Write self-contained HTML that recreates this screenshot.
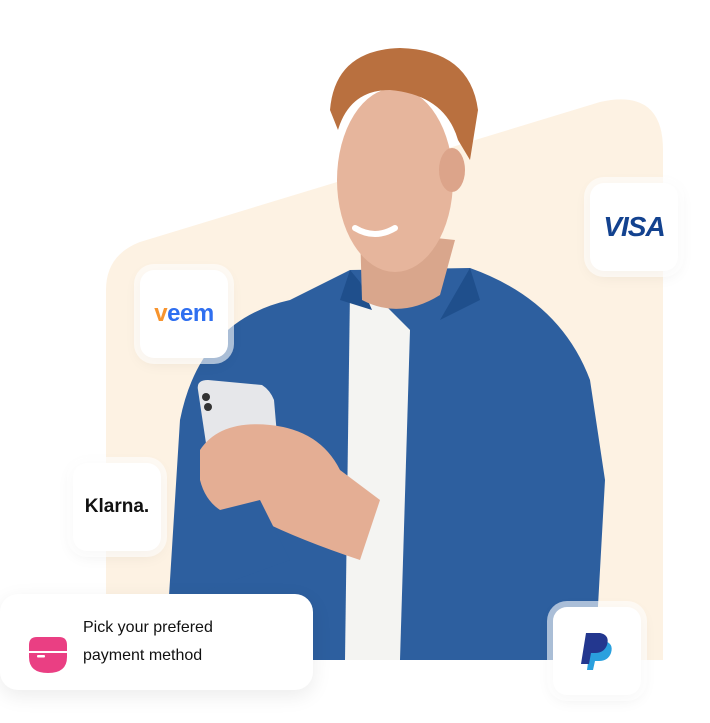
<!DOCTYPE html>
<html><head><meta charset="utf-8"><style>
body{margin:0;width:710px;height:723px;background:#fff;position:relative;overflow:hidden;font-family:"Liberation Sans",sans-serif}
.card{position:absolute;background:#fff;border-radius:14px;box-shadow:0 0 0 6px rgba(255,255,255,.6),0 4px 16px rgba(0,0,0,.08);display:flex;align-items:center;justify-content:center}
</style></head><body>
<svg width="710" height="723" style="position:absolute;left:0;top:0">
<path d="M106 290 Q106 255 140 242 L600 102 Q663 88 663 150 L663 660 L106 660 Z" fill="#fdf2e3"/>
<!-- shirt -->
<path d="M165 660 L180 420 Q200 320 290 300 L350 270 L470 268 Q560 300 590 380 L605 480 L595 660 Z" fill="#2d5f9f"/>
<path d="M350 290 L345 660 L400 660 L410 330 L380 300 Z" fill="#f4f4f2"/>
<path d="M350 270 L340 300 L372 310 L360 282 Z M470 268 L480 300 L440 320 Z" fill="#1f4f8c"/>
<!-- neck -->
<path d="M360 230 L362 300 Q400 320 440 295 L455 240 Z" fill="#d9a68c"/>
<!-- face -->
<ellipse cx="395" cy="180" rx="58" ry="92" fill="#e6b59c"/>
<ellipse cx="452" cy="170" rx="13" ry="22" fill="#dca48a"/>
<path d="M330 110 Q335 50 400 48 Q470 50 478 110 L470 160 L458 140 Q445 95 390 90 Q350 90 338 130 Z" fill="#b9703f"/>
<path d="M355 228 Q375 240 395 228" stroke="#fff" stroke-width="6" fill="none" stroke-linecap="round"/>
<!-- phone -->
<path d="M198 390 Q196 380 208 380 L262 385 Q270 390 274 400 L280 470 L210 470 Z" fill="#e6e7ea"/>
<circle cx="206" cy="397" r="4" fill="#333"/><circle cx="208" cy="407" r="4" fill="#333"/>
<!-- hands -->
<path d="M200 450 Q220 420 270 425 Q320 430 340 470 L380 500 L360 560 Q300 540 260 520 Q210 520 200 480 Z" fill="#e4ae94"/>
<path d="M180 520 L260 500 L290 560 L180 600 Z" fill="#2d5f9f"/>
</svg>
<div class="card" style="left:140px;top:270px;width:88px;height:88px"><span style="font:bold 24px 'Liberation Sans',sans-serif;color:#2f6ff0;letter-spacing:-0.5px"><span style="color:#f7942e">v</span>eem</span></div>
<div class="card" style="left:590px;top:183px;width:88px;height:88px"><span style="font:italic bold 28px 'Liberation Sans',sans-serif;color:#13428f;letter-spacing:-1px">VISA</span></div>
<div class="card" style="left:73px;top:463px;width:88px;height:88px"><span style="font:bold 19px 'Liberation Sans',sans-serif;color:#111">Klarna.</span></div>
<div class="card" style="left:553px;top:607px;width:88px;height:88px"><svg width="34" height="40" viewBox="0 0 34 40"><path d="M11 10 L24 10 Q34 12 31 22 Q28 30 19 30 L15 30 L13 39 L7 39 Z" fill="#2aa0de"/><path d="M6 2 L20 2 Q30 4 27 14 Q24 22 15 22 L11 22 L9 33 L1 33 Z" fill="#23378f"/></svg></div>
<div style="position:absolute;left:0;top:594px;width:313px;height:96px;background:#fff;border-radius:18px;box-shadow:0 6px 20px rgba(0,0,0,.08)">
<svg style="position:absolute;left:29px;top:43px" width="38" height="36" viewBox="0 0 38 36"><path d="M8 0 H30 Q38 0 38 8 V20 Q38 36 19 36 Q0 36 0 20 V8 Q0 0 8 0 Z" fill="#ea3f83"/><rect x="0" y="14" width="38" height="2" fill="#fff"/><rect x="8" y="18" width="8" height="2.5" rx="1" fill="#fff"/></svg>
<div style="position:absolute;left:83px;top:20px;font-size:16px;line-height:28px;color:#111">Pick your prefered<br>payment method</div>
</div>
</body></html>
